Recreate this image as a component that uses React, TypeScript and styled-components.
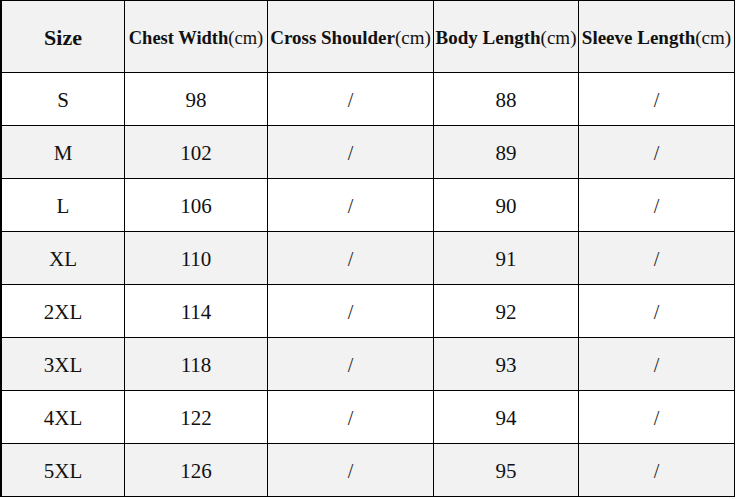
import React from "react";
import styled, { createGlobalStyle } from "styled-components";

const GlobalStyle = createGlobalStyle`
  html, body {
    margin: 0;
    padding: 0;
    background: #ffffff;
  }
  body {
    font-family: "Liberation Serif", "Times New Roman", serif;
    color: #111;
  }
`;

const Grid = styled.div`
  display: grid;
  grid-template-columns: 123px 143px 166px 145px 156px;
  grid-auto-rows: 53px;
  grid-template-rows: 72px;
  width: 735px;
  box-sizing: border-box;
  border-top: 1px solid #000;
  border-left: 2px solid #000;
`;

const Cell = styled.div<{ $shade?: boolean }>`
  box-sizing: border-box;
  padding-top: 2px;
  border-right: 1px solid #000;
  border-bottom: 1px solid #000;
  background: ${(p) => (p.$shade ? "#f2f2f2" : "#ffffff")};
  display: flex;
  align-items: center;
  justify-content: center;
  font-size: 21px;
  color: #111;
  white-space: nowrap;
`;

const HeadCell = styled(Cell)<{ $size?: number }>`
  background: #f2f2f2;
  padding-top: 3px;
  font-size: ${(p) => p.$size ?? 19}px;
`;

const Strong = styled.b`
  font-weight: bold;
`;

const Slash = styled.span`
  display: inline-block;
  font-size: 20px;
  color: #222;
`;

const headers: { label: string; unit?: string; size?: number }[] = [
  { label: "Size", size: 22 },
  { label: "Chest Width", unit: "(cm)", size: 18.5 },
  { label: "Cross Shoulder", unit: "(cm)" },
  { label: "Body Length", unit: "(cm)" },
  { label: "Sleeve Length", unit: "(cm)" },
];

const rows = [
  ["S", "98", "/", "88", "/"],
  ["M", "102", "/", "89", "/"],
  ["L", "106", "/", "90", "/"],
  ["XL", "110", "/", "91", "/"],
  ["2XL", "114", "/", "92", "/"],
  ["3XL", "118", "/", "93", "/"],
  ["4XL", "122", "/", "94", "/"],
  ["5XL", "126", "/", "95", "/"],
];

export default function App() {
  return (
    <>
      <GlobalStyle />
      <Grid>
        {headers.map((h) => (
          <HeadCell key={h.label} $size={h.size}>
            <Strong>{h.label}</Strong>
            {h.unit}
          </HeadCell>
        ))}
        {rows.map((r, i) =>
          r.map((v, j) => (
            <Cell key={`${i}-${j}`} $shade={i % 2 === 1}>
              {v === "/" ? <Slash>/</Slash> : v}
            </Cell>
          ))
        )}
      </Grid>
    </>
  );
}
